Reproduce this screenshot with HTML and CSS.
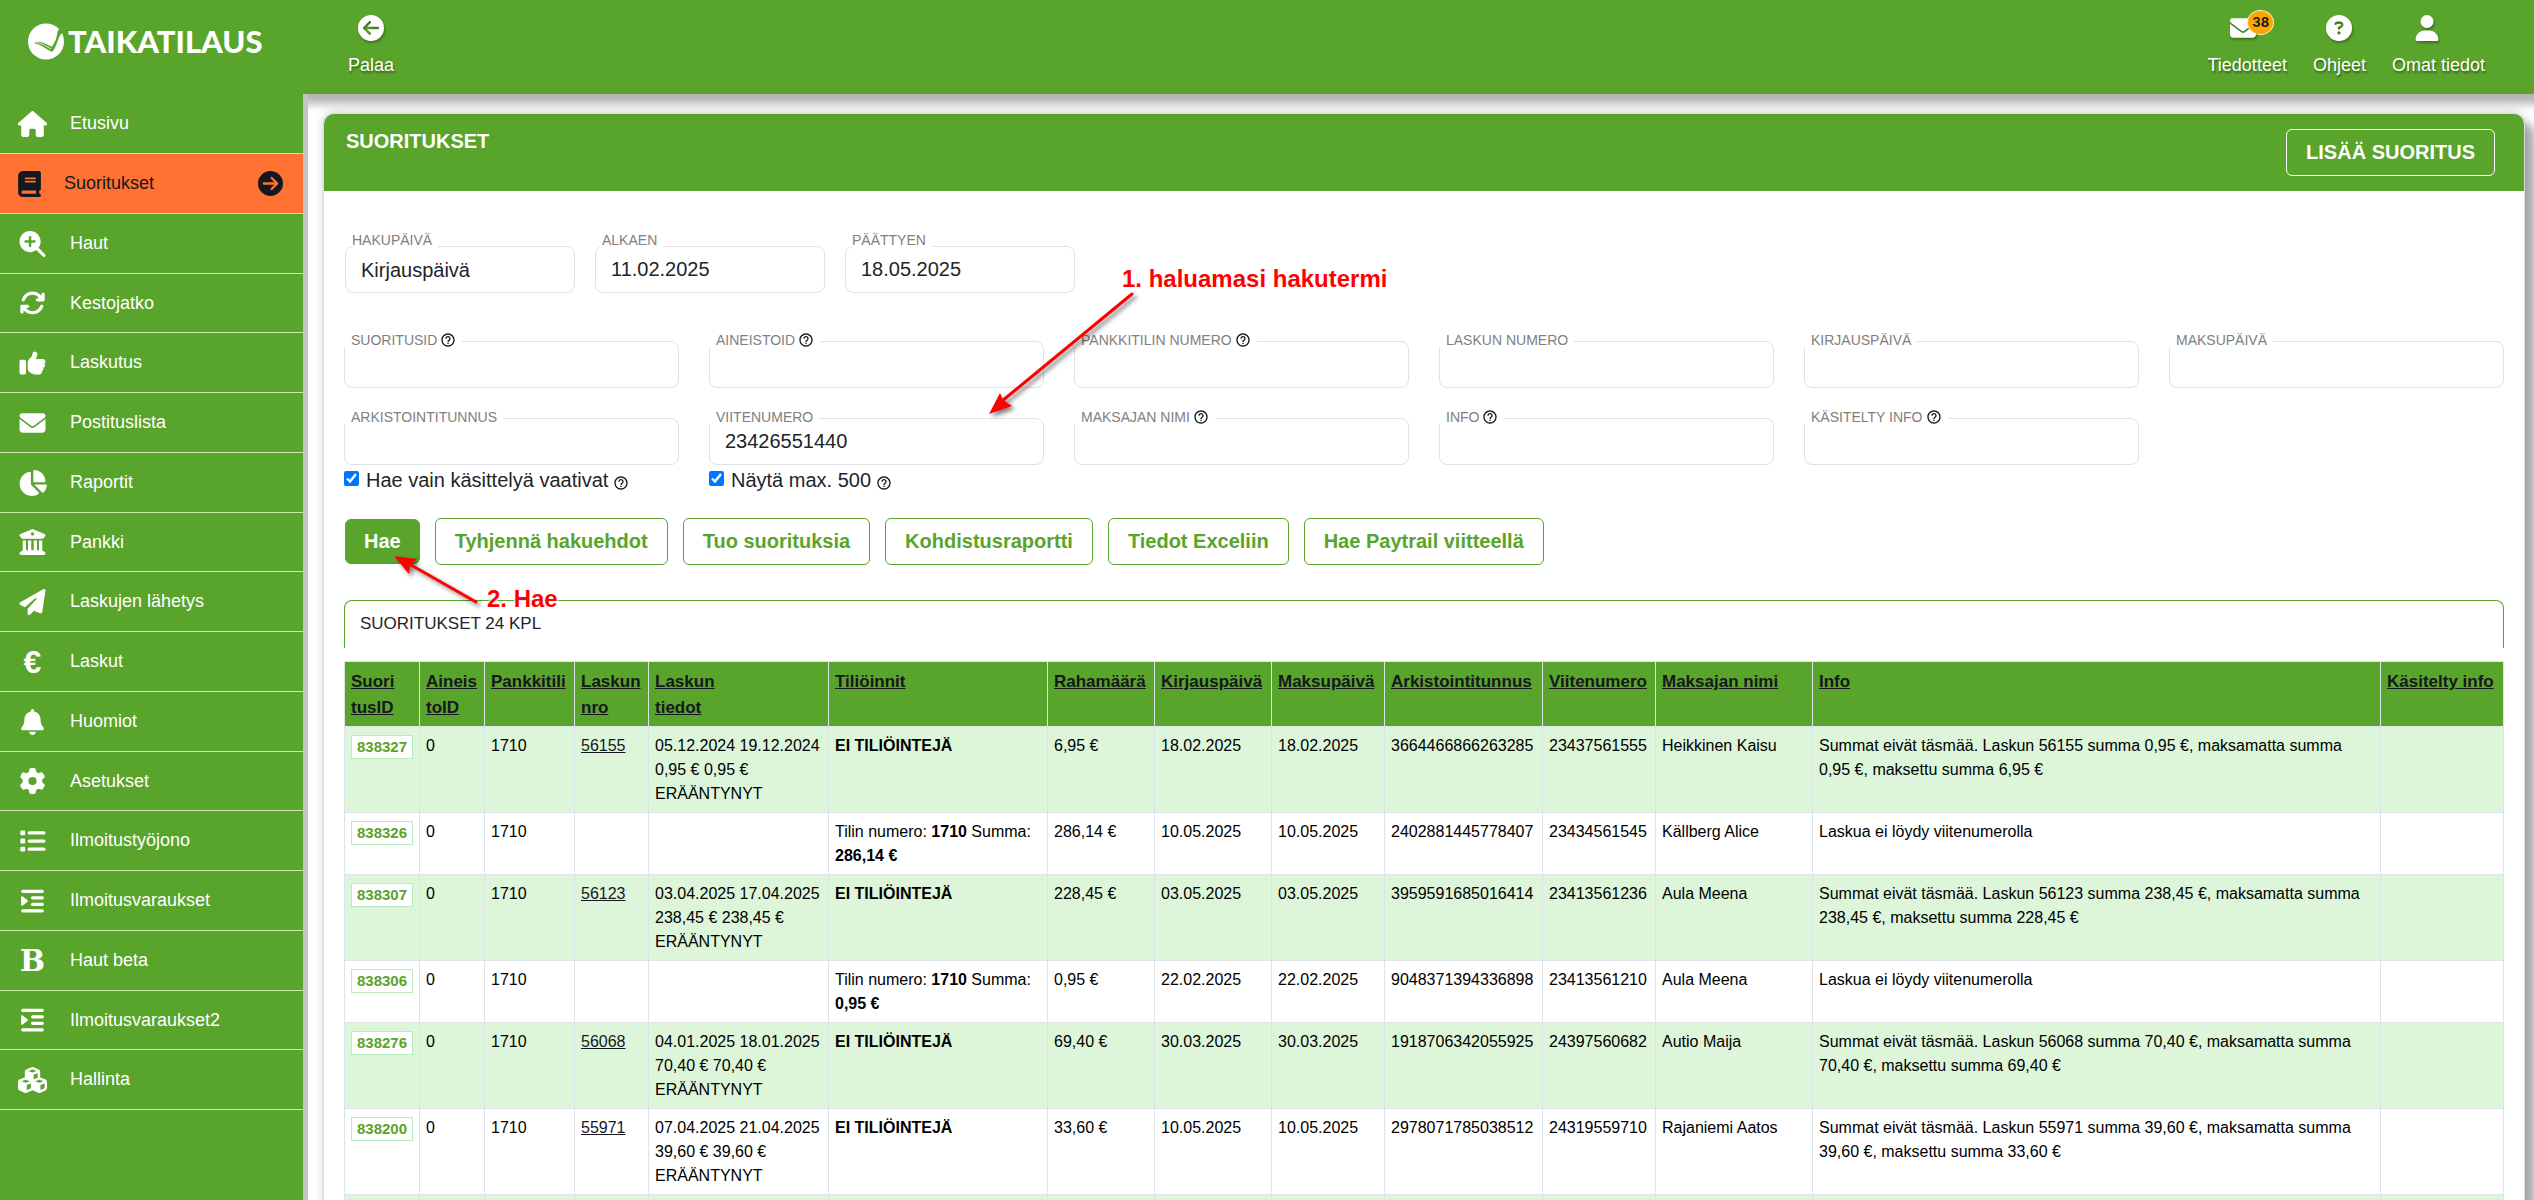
FILE: index.html
```html
<!DOCTYPE html>
<html lang="fi">
<head>
  <meta charset="UTF-8">
  <title>Suoritukset - Taikatilaus</title>
  <meta name="viewport" content="width=device-width, initial-scale=1.0">
  <link rel="stylesheet" href="styles.css">
</head>
<body>

  <!-- Icon sprite -->
  <svg class="sprite" aria-hidden="true">
    <symbol id="i-house" viewBox="0 0 576 512"><path d="M575.8 255.5c0 18-15 32.1-32 32.1h-32l.7 160.2c0 2.7-.2 5.4-.5 8.1V472c0 22.1-17.9 40-40 40H456c-1.1 0-2.2 0-3.3-.1c-1.4 .1-2.8 .1-4.2 .1H416 392c-22.1 0-40-17.9-40-40V448 384c0-17.7-14.3-32-32-32H256c-17.7 0-32 14.3-32 32v64 24c0 22.1-17.9 40-40 40H160 128.1c-1.5 0-3-.1-4.5-.2c-1.2 .1-2.4 .2-3.6 .2H104c-22.1 0-40-17.9-40-40V360c0-.9 0-1.9 .1-2.8V287.6H32c-18 0-32-14-32-32.1c0-9 3-17 10-24L266.4 8c7-7 15-8 22-8s15 2 21 7L564.8 231.5c8 7 12 15 11 24z"/></symbol>
    <symbol id="i-book" viewBox="0 0 448 512"><path d="M96 0C43 0 0 43 0 96V416c0 53 43 96 96 96H384h32c17.7 0 32-14.3 32-32s-14.3-32-32-32V384c17.7 0 32-14.3 32-32V32c0-17.7-14.3-32-32-32H384 96zm0 384H352v64H96c-17.7 0-32-14.3-32-32s14.3-32 32-32zm32-240c0-8.8 7.2-16 16-16H336c8.8 0 16 7.2 16 16s-7.2 16-16 16H144c-8.8 0-16-7.2-16-16zm16 48H336c8.8 0 16 7.2 16 16s-7.2 16-16 16H144c-8.8 0-16-7.2-16-16s7.2-16 16-16z"/></symbol>
    <symbol id="i-circle-right" viewBox="0 0 512 512"><path d="M0 256a256 256 0 1 0 512 0A256 256 0 1 0 0 256zM297 385c-9.4 9.4-24.6 9.4-33.9 0s-9.4-24.6 0-33.9l71-71L120 280c-13.3 0-24-10.7-24-24s10.7-24 24-24l214.1 0-71-71c-9.4-9.4-9.4-24.6 0-33.9s24.6-9.4 33.9 0L409 239c9.4 9.4 9.4 24.6 0 33.9L297 385z"/></symbol>
    <symbol id="i-circle-left" viewBox="0 0 512 512"><path transform="matrix(-1 0 0 1 512 0)" d="M0 256a256 256 0 1 0 512 0A256 256 0 1 0 0 256zM297 385c-9.4 9.4-24.6 9.4-33.9 0s-9.4-24.6 0-33.9l71-71L120 280c-13.3 0-24-10.7-24-24s10.7-24 24-24l214.1 0-71-71c-9.4-9.4-9.4-24.6 0-33.9s24.6-9.4 33.9 0L409 239c9.4 9.4 9.4 24.6 0 33.9L297 385z"/></symbol>
    <symbol id="i-search-plus" viewBox="0 0 512 512"><path d="M416 208c0 45.9-14.9 88.3-40 122.7L502.6 457.4c12.5 12.5 12.5 32.8 0 45.3s-32.8 12.5-45.3 0L330.7 376c-34.4 25.2-76.8 40-122.7 40C93.1 416 0 322.9 0 208S93.1 0 208 0S416 93.1 416 208zM184 296c0 13.3 10.7 24 24 24s24-10.7 24-24V232h64c13.3 0 24-10.7 24-24s-10.7-24-24-24H232V120c0-13.3-10.7-24-24-24s-24 10.7-24 24v64H120c-13.3 0-24 10.7-24 24s10.7 24 24 24h64v64z"/></symbol>
    <symbol id="i-rotate" viewBox="0 0 512 512"><path d="M105.1 202.6c7.7-21.8 20.2-42.3 37.8-59.8c62.5-62.5 163.8-62.5 226.3 0L386.3 160H352c-17.7 0-32 14.3-32 32s14.3 32 32 32H463.5c0 0 0 0 0 0h.4c17.7 0 32-14.3 32-32V80c0-17.7-14.3-32-32-32s-32 14.3-32 32v35.2L414.4 97.6c-87.5-87.5-229.3-87.5-316.8 0C73.2 122 55.6 150.7 44.8 181.4c-5.9 16.7 2.9 34.9 19.5 40.8s34.9-2.9 40.8-19.5zM39 289.3c-5 1.5-9.8 4.2-13.7 8.2c-4 4-6.7 8.8-8.1 14c-.3 1.2-.6 2.5-.8 3.8c-.3 1.7-.4 3.4-.4 5.1V432c0 17.7 14.3 32 32 32s32-14.3 32-32V396.9l17.6 17.5 0 0c87.5 87.4 229.3 87.4 316.7 0c24.4-24.4 42.1-53.1 52.9-83.7c5.9-16.7-2.9-34.9-19.5-40.8s-34.9 2.9-40.8 19.5c-7.7 21.8-20.2 42.3-37.8 59.8c-62.5 62.5-163.8 62.5-226.3 0l-.1-.1L125.6 352H160c17.7 0 32-14.3 32-32s-14.3-32-32-32H48.4c-1.6 0-3.2 .1-4.8 .3s-3.1 .5-4.6 1z"/></symbol>
    <symbol id="i-thumb" viewBox="0 0 512 512"><path d="M313.4 32.9c26 5.2 42.9 30.5 37.7 56.5l-2.3 11.4c-5.3 26.7-15.1 52.1-28.8 75.2H464c26.5 0 48 21.5 48 48c0 18.5-10.5 34.6-25.9 42.6C497 275.4 504 288.9 504 304c0 23.4-16.8 42.9-38.9 47.1c4.4 7.3 6.9 15.8 6.9 24.9c0 21.3-13.9 39.4-33.1 45.6c.7 3.3 1.1 6.8 1.1 10.4c0 26.5-21.5 48-48 48H294.5c-19 0-37.5-5.6-53.3-16.1l-38.5-25.7C176 420.4 160 390.4 160 358.3V320 272 247.1c0-29.2 13.3-56.7 36-75l7.4-5.9c26.5-21.2 44.6-51 51.2-84.2l2.3-11.4c5.2-26 30.5-42.9 56.5-37.7zM32 192H96c17.7 0 32 14.3 32 32V448c0 17.7-14.3 32-32 32H32c-17.7 0-32-14.3-32-32V224c0-17.7 14.3-32 32-32z"/></symbol>
    <symbol id="i-envelope" viewBox="0 0 512 512"><path d="M48 64C21.5 64 0 85.5 0 112c0 15.1 7.1 29.3 19.2 38.4L236.8 313.6c11.4 8.5 27 8.5 38.4 0L492.8 150.4c12.1-9.1 19.2-23.3 19.2-38.4c0-26.5-21.5-48-48-48H48zM0 176V384c0 35.3 28.7 64 64 64H448c35.3 0 64-28.7 64-64V176L294.4 339.2c-22.8 17.1-54 17.1-76.8 0L0 176z"/></symbol>
    <symbol id="i-pie" viewBox="0 0 576 512"><path d="M304 240V16.6c0-9 7-16.6 16-16.6C443.7 0 544 100.3 544 224c0 9-7.6 16-16.6 16H304zM32 272C32 150.7 122.1 50.3 239 34.3c9.2-1.3 17 6.1 17 15.4V288L412.5 444.5c6.7 6.7 6.2 17.7-1.5 23.1C371.8 495.6 323.8 512 272 512C139.5 512 32 404.6 32 272zm526.4 16c9.3 0 16.6 7.8 15.4 17c-7.7 55.9-34.6 105.6-73.9 142.3c-6 5.6-15.4 5.2-21.2-.7L320 288H558.4z"/></symbol>
    <symbol id="i-bank" viewBox="0 0 512 512"><path d="M243.4 2.6l-224 96c-14 6-21.8 21-18.7 35.8S16.8 160 32 160v8c0 13.3 10.7 24 24 24H456c13.3 0 24-10.7 24-24v-8c15.2 0 28.3-10.7 31.3-25.6s-4.8-29.9-18.7-35.8l-224-96c-8-3.4-17.2-3.4-25.2 0zM128 224H64V420.3c-.6 .3-1.2 .7-1.8 1.1l-48 32c-11.7 7.8-17 22.4-12.9 35.9S17.9 512 32 512H480c14.1 0 26.5-9.2 30.6-22.7s-1.1-28.1-12.9-35.9l-48-32c-.6-.4-1.2-.7-1.8-1.1V224H384V416H344V224H280V416H232V224H168V416H128V224zM256 64a32 32 0 1 1 0 64 32 32 0 1 1 0-64z"/></symbol>
    <symbol id="i-plane" viewBox="0 0 512 512"><path d="M498.1 5.6c10.1 7 15.4 19.1 13.5 31.2l-64 416c-1.5 9.7-7.4 18.2-16 23s-18.9 5.4-28 1.6L284 427.7l-68.5 74.1c-8.9 9.7-22.9 12.9-35.2 8.1S160 493.2 160 480V396.4c0-4 1.5-7.8 4.2-10.7L331.8 202.8c5.8-6.3 5.6-16-.4-22s-15.7-6.4-22-.7L106 360.8 17.7 316.6C7.1 311.3 .3 300.7 0 288.9s5.9-22.8 16.1-28.7l448-256c10.7-6.1 23.9-5.5 34 1.4z"/></symbol>
    <symbol id="i-bell" viewBox="0 0 448 512"><path d="M224 0c-17.7 0-32 14.3-32 32V51.2C119 66 64 130.6 64 208v18.8c0 47-17.3 92.4-48.5 127.6l-7.4 8.3c-8.4 9.4-10.4 22.9-5.3 34.4S19.4 416 32 416H416c12.6 0 24-7.4 29.2-18.9s3.1-25-5.3-34.4l-7.4-8.3C401.3 319.2 384 273.9 384 226.8V208c0-77.4-55-142-128-156.8V32c0-17.7-14.3-32-32-32zm45.3 493.3c12-12 18.7-28.3 18.7-45.3H224 160c0 17 6.7 33.3 18.7 45.3s28.3 18.7 45.3 18.7s33.3-6.7 45.3-18.7z"/></symbol>
    <symbol id="i-gear" viewBox="0 0 512 512"><path d="M495.9 166.6c3.2 8.7 .5 18.4-6.4 24.6l-43.3 39.4c1.1 8.3 1.7 16.8 1.7 25.4s-.6 17.1-1.7 25.4l43.3 39.4c6.9 6.2 9.6 15.9 6.4 24.6c-4.4 11.9-9.7 23.3-15.8 34.3l-4.7 8.1c-6.6 11-14 21.4-22.1 31.2c-5.9 7.2-15.7 9.6-24.5 6.8l-55.7-17.7c-13.4 10.3-28.2 18.9-44 25.4l-12.5 57.1c-2 9.1-9 16.3-18.2 17.8c-13.8 2.3-28 3.5-42.5 3.5s-28.7-1.2-42.5-3.5c-9.2-1.5-16.2-8.7-18.2-17.8l-12.5-57.1c-15.8-6.5-30.6-15.1-44-25.4L83.1 425.9c-8.8 2.8-18.6 .3-24.5-6.8c-8.1-9.8-15.5-20.2-22.1-31.2l-4.7-8.1c-6.1-11-11.4-22.4-15.8-34.3c-3.2-8.7-.5-18.4 6.4-24.6l43.3-39.4C64.6 273.1 64 264.6 64 256s.6-17.1 1.7-25.4L22.4 191.2c-6.9-6.2-9.6-15.9-6.4-24.6c4.4-11.9 9.7-23.3 15.8-34.3l4.7-8.1c6.6-11 14-21.4 22.1-31.2c5.9-7.2 15.7-9.6 24.5-6.8l55.7 17.7c13.4-10.3 28.2-18.9 44-25.4l12.5-57.1c2-9.1 9-16.3 18.2-17.8C227.3 1.2 241.5 0 256 0s28.7 1.2 42.5 3.5c9.2 1.5 16.2 8.7 18.2 17.8l12.5 57.1c15.8 6.5 30.6 15.1 44 25.4l55.7-17.7c8.8-2.8 18.6-.3 24.5 6.8c8.1 9.8 15.5 20.2 22.1 31.2l4.7 8.1c6.1 11 11.4 22.4 15.8 34.3zM256 336a80 80 0 1 0 0-160 80 80 0 1 0 0 160z"/></symbol>
    <symbol id="i-list" viewBox="0 0 512 512"><rect x="16" y="48" width="96" height="96" rx="24"/><rect x="16" y="208" width="96" height="96" rx="24"/><rect x="16" y="368" width="96" height="96" rx="24"/><rect x="160" y="64" width="352" height="64" rx="32"/><rect x="160" y="224" width="352" height="64" rx="32"/><rect x="160" y="384" width="352" height="64" rx="32"/></symbol>
    <symbol id="i-indent" viewBox="0 0 448 512"><rect x="0" y="32" width="448" height="64" rx="32"/><rect x="192" y="160" width="256" height="64" rx="32"/><rect x="192" y="288" width="256" height="64" rx="32"/><rect x="0" y="416" width="448" height="64" rx="32"/><path d="M127.8 268.6L25.8 347.9C15.3 356.1 0 348.6 0 335.3V176.7c0-13.3 15.3-20.8 25.8-12.6l102 79.3c8.2 6.4 8.2 18.8 0 25.2z"/></symbol>
    <symbol id="i-cubes" viewBox="0 0 576 512"><path d="M290.8 48.6l78.4 29.7L288 109.5 206.8 78.3l78.4-29.7c1.8-.7 3.8-.7 5.7 0zM136 92.5V204.7c-1.3 .4-2.6 .8-3.9 1.3l-96 36.4C14.4 250.6 0 271.5 0 294.7V413.9c0 22.2 13.1 42.3 33.5 51.3l96 42.2c14.4 6.3 30.7 6.3 45.1 0L288 457.5l113.5 49.9c14.4 6.3 30.7 6.3 45.1 0l96-42.2c20.3-8.9 33.5-29.1 33.5-51.3V294.7c0-23.3-14.4-44.1-36.1-52.4l-96-36.4c-1.3-.5-2.6-.9-3.9-1.3V92.5c0-23.3-14.4-44.1-36.1-52.4l-96-36.4c-12.8-4.8-26.9-4.8-39.7 0l-96 36.4C150.4 48.4 136 69.3 136 92.5zM392 210.6l-82.4 31.2V152.6L392 121v89.6zM154.8 250.9l78.4 29.7L152 311.7 70.8 280.6l78.4-29.7c1.8-.7 3.8-.7 5.7 0zm18.8 204.4V354.8L256 323.2v95.9l-82.4 36.2zM421.2 250.9c1.8-.7 3.8-.7 5.7 0l78.4 29.7L424 311.7l-81.2-31.1 78.4-29.7zM523.2 421.2l-77.6 34.1V354.8L528 323.2v90.7c0 3.2-1.9 6-4.8 7.3z"/></symbol>
    <symbol id="i-question" viewBox="0 0 512 512"><path d="M256 512A256 256 0 1 0 256 0a256 256 0 1 0 0 512zM169.8 165.3c7.9-22.3 29.1-37.3 52.8-37.3h58.3c34.9 0 63.1 28.3 63.1 63.1c0 22.6-12.1 43.5-31.7 54.8L280 264.4c-.2 13-10.9 23.6-24 23.6c-13.3 0-24-10.7-24-24V250.5c0-8.6 4.6-16.5 12.1-20.8l44.3-25.4c4.7-2.7 7.6-7.7 7.6-13.1c0-8.4-6.8-15.1-15.1-15.1H222.6c-3.4 0-6.4 2.1-7.5 5.3l-.4 1.2c-4.4 12.5-18.2 19-30.6 14.6s-19-18.2-14.6-30.6l.4-1.2zM224 352a32 32 0 1 1 64 0 32 32 0 1 1 -64 0z"/></symbol>
    <symbol id="i-user" viewBox="0 0 448 512"><path d="M224 256A128 128 0 1 0 224 0a128 128 0 1 0 0 256zm-45.7 48C79.8 304 0 383.8 0 482.3C0 498.7 13.3 512 29.7 512H418.3c16.4 0 29.7-13.3 29.7-29.7C448 383.8 368.2 304 269.7 304H178.3z"/></symbol>
    <symbol id="i-help" viewBox="0 0 24 24"><path d="M11 18h2v-2h-2v2zm1-16C6.480 2 2 6.480 2 12s4.480 10 10 10 10-4.480 10-10S17.520 2 12 2zm0 18c-4.410 0-8-3.590-8-8s3.590-8 8-8 8 3.590 8 8-3.590 8-8 8zm0-14c-2.210 0-4 1.790-4 4h2c0-1.100.900-2 2-2s2 .900 2 2c0 2-3 1.750-3 5h2c0-2.250 3-2.500 3-5 0-2.210-1.790-4-4-4z"/></symbol>
  </svg>

  <header class="topbar">
    <a class="logo" href="#">
      <svg class="logo-mark" viewBox="0 0 37 37">
        <circle cx="18" cy="18.500" r="18" fill="#fff"/>
        <path d="M32 5C28 8 30 15 26 20C25 23 24 24 22 23C17 20 12 18 7 19L7 21C13 21 18 26 24 29C28 26 29 17 33 11L38 9V3Z" fill="#59a42b"/>
        <path d="M7 18.500C13 16 19 21 24 23M7 20C13 19 18 23 23 26" fill="none" stroke="#fff" stroke-width="0.800"/>
      </svg>
      <span class="logo-text">TAIKATILAUS</span>
    </a>
    <a class="top-link" href="#">
      <svg class="top-icon"><use href="#i-circle-left"/></svg>
      <span>Palaa</span>
    </a>
    <nav class="top-nav">
      <a class="top-link" href="#">
        <span class="icon-wrap">
          <svg class="top-icon"><use href="#i-envelope"/></svg>
          <span class="count">38</span>
        </span>
        <span>Tiedotteet</span>
      </a>
      <a class="top-link" href="#">
        <svg class="top-icon"><use href="#i-question"/></svg>
        <span>Ohjeet</span>
      </a>
      <a class="top-link user-link" href="#">
        <svg class="top-icon"><use href="#i-user"/></svg>
        <span>Omat tiedot</span>
      </a>
    </nav>
  </header>

  <div class="layout">
    <nav class="sidebar">
      <a href="#"><svg class="side-icon"><use href="#i-house"/></svg>Etusivu</a>
      <a href="#" class="active"><svg class="side-icon"><use href="#i-book"/></svg>Suoritukset<svg class="arrow-icon"><use href="#i-circle-right"/></svg></a>
      <a href="#"><svg class="side-icon"><use href="#i-search-plus"/></svg>Haut</a>
      <a href="#"><svg class="side-icon"><use href="#i-rotate"/></svg>Kestojatko</a>
      <a href="#"><svg class="side-icon"><use href="#i-thumb"/></svg>Laskutus</a>
      <a href="#"><svg class="side-icon"><use href="#i-envelope"/></svg>Postituslista</a>
      <a href="#"><svg class="side-icon"><use href="#i-pie"/></svg>Raportit</a>
      <a href="#"><svg class="side-icon"><use href="#i-bank"/></svg>Pankki</a>
      <a href="#"><svg class="side-icon"><use href="#i-plane"/></svg>Laskujen lähetys</a>
      <a href="#"><span class="side-icon glyph-euro">€</span>Laskut</a>
      <a href="#"><svg class="side-icon"><use href="#i-bell"/></svg>Huomiot</a>
      <a href="#"><svg class="side-icon"><use href="#i-gear"/></svg>Asetukset</a>
      <a href="#"><svg class="side-icon"><use href="#i-list"/></svg>Ilmoitustyöjono</a>
      <a href="#"><svg class="side-icon"><use href="#i-indent"/></svg>Ilmoitusvaraukset</a>
      <a href="#"><span class="side-icon glyph-b">B</span>Haut beta</a>
      <a href="#"><svg class="side-icon"><use href="#i-indent"/></svg>Ilmoitusvaraukset2</a>
      <a href="#"><svg class="side-icon"><use href="#i-cubes"/></svg>Hallinta</a>
    </nav>

    <main class="content">
      <section class="card">
        <div class="card-header">
          <h1>SUORITUKSET</h1>
          <button type="button" class="btn btn-light">LISÄÄ SUORITUS</button>
        </div>

        <div class="card-body">
          <form>
            <div class="date-row">
              <div class="field">
                <label for="hakupaiva">HAKUPÄIVÄ</label>
                <select id="hakupaiva"><option>Kirjauspäivä</option></select>
              </div>
              <div class="field">
                <label for="alkaen">ALKAEN</label>
                <input type="text" id="alkaen" value="11.02.2025">
              </div>
              <div class="field">
                <label for="paattyen">PÄÄTTYEN</label>
                <input type="text" id="paattyen" value="18.05.2025">
              </div>
            </div>

            <div class="field-grid">
              <div class="field">
                <label for="suoritusid">SUORITUSID <svg class="help"><use href="#i-help"/></svg></label>
                <input type="text" id="suoritusid">
              </div>
              <div class="field">
                <label for="aineistoid">AINEISTOID <svg class="help"><use href="#i-help"/></svg></label>
                <input type="text" id="aineistoid">
              </div>
              <div class="field">
                <label for="pankkitili">PANKKITILIN NUMERO <svg class="help"><use href="#i-help"/></svg></label>
                <input type="text" id="pankkitili">
              </div>
              <div class="field">
                <label for="laskunro">LASKUN NUMERO</label>
                <input type="text" id="laskunro">
              </div>
              <div class="field">
                <label for="kirjauspaiva">KIRJAUSPÄIVÄ</label>
                <input type="text" id="kirjauspaiva">
              </div>
              <div class="field">
                <label for="maksupaiva">MAKSUPÄIVÄ</label>
                <input type="text" id="maksupaiva">
              </div>
              <div class="field">
                <label for="arkistointi">ARKISTOINTITUNNUS</label>
                <input type="text" id="arkistointi">
              </div>
              <div class="field">
                <label for="viitenumero">VIITENUMERO</label>
                <input type="text" id="viitenumero" value="23426551440">
              </div>
              <div class="field">
                <label for="maksaja">MAKSAJAN NIMI <svg class="help"><use href="#i-help"/></svg></label>
                <input type="text" id="maksaja">
              </div>
              <div class="field">
                <label for="info">INFO <svg class="help"><use href="#i-help"/></svg></label>
                <input type="text" id="info">
              </div>
              <div class="field">
                <label for="kasitelty">KÄSITELTY INFO <svg class="help"><use href="#i-help"/></svg></label>
                <input type="text" id="kasitelty">
              </div>
            </div>

            <div class="check-grid">
              <div class="check">
                <input type="checkbox" id="vaativat" checked>
                <label for="vaativat">Hae vain käsittelyä vaativat</label>
                <svg class="help"><use href="#i-help"/></svg>
              </div>
              <div class="check">
                <input type="checkbox" id="max500" checked>
                <label for="max500">Näytä max. 500</label>
                <svg class="help"><use href="#i-help"/></svg>
              </div>
            </div>

            <div class="buttons">
              <button type="button" class="btn btn-primary">Hae</button>
              <button type="button" class="btn">Tyhjennä hakuehdot</button>
              <button type="button" class="btn">Tuo suorituksia</button>
              <button type="button" class="btn">Kohdistusraportti</button>
              <button type="button" class="btn">Tiedot Exceliin</button>
              <button type="button" class="btn">Hae Paytrail viitteellä</button>
            </div>
          </form>

          <div class="summary">SUORITUKSET 24 KPL</div>

          <table class="payments">
            <colgroup>
              <col class="c-id"><col class="c-batch"><col class="c-account"><col class="c-bill"><col class="c-billinfo">
              <col class="c-posting"><col class="c-sum"><col class="c-date"><col class="c-paid"><col class="c-archive">
              <col class="c-ref"><col class="c-payer"><col><col class="c-handled">
            </colgroup>
            <thead>
              <tr>
                <th><a href="#">Suori<br>tusID</a></th>
                <th><a href="#">Aineis<br>toID</a></th>
                <th><a href="#">Pankkitili</a></th>
                <th><a href="#">Laskun<br>nro</a></th>
                <th><a href="#">Laskun<br>tiedot</a></th>
                <th><a href="#">Tiliöinnit</a></th>
                <th><a href="#">Rahamäärä</a></th>
                <th><a href="#">Kirjauspäivä</a></th>
                <th><a href="#">Maksupäivä</a></th>
                <th><a href="#">Arkistointitunnus</a></th>
                <th><a href="#">Viitenumero</a></th>
                <th><a href="#">Maksajan nimi</a></th>
                <th><a href="#">Info</a></th>
                <th><a href="#">Käsitelty info</a></th>
              </tr>
            </thead>
            <tbody>
              <tr>
                <td><a class="id-link" href="#">838327</a></td>
                <td>0</td>
                <td>1710</td>
                <td><a href="#">56155</a></td>
                <td>05.12.2024 19.12.2024<br>0,95 € 0,95 €<br>ERÄÄNTYNYT</td>
                <td><b>EI TILIÖINTEJÄ</b></td>
                <td>6,95 €</td>
                <td>18.02.2025</td>
                <td>18.02.2025</td>
                <td>3664466866263285</td>
                <td>23437561555</td>
                <td>Heikkinen Kaisu</td>
                <td>Summat eivät täsmää. Laskun 56155 summa 0,95&nbsp;€, maksamatta summa 0,95&nbsp;€, maksettu summa 6,95&nbsp;€</td>
                <td></td>
              </tr>
              <tr>
                <td><a class="id-link" href="#">838326</a></td>
                <td>0</td>
                <td>1710</td>
                <td></td>
                <td></td>
                <td>Tilin numero: <b>1710</b> Summa: <b>286,14&nbsp;€</b></td>
                <td>286,14 €</td>
                <td>10.05.2025</td>
                <td>10.05.2025</td>
                <td>2402881445778407</td>
                <td>23434561545</td>
                <td>Källberg Alice</td>
                <td>Laskua ei löydy viitenumerolla</td>
                <td></td>
              </tr>
              <tr>
                <td><a class="id-link" href="#">838307</a></td>
                <td>0</td>
                <td>1710</td>
                <td><a href="#">56123</a></td>
                <td>03.04.2025 17.04.2025<br>238,45 € 238,45 €<br>ERÄÄNTYNYT</td>
                <td><b>EI TILIÖINTEJÄ</b></td>
                <td>228,45 €</td>
                <td>03.05.2025</td>
                <td>03.05.2025</td>
                <td>3959591685016414</td>
                <td>23413561236</td>
                <td>Aula Meena</td>
                <td>Summat eivät täsmää. Laskun 56123 summa 238,45&nbsp;€, maksamatta summa 238,45&nbsp;€, maksettu summa 228,45&nbsp;€</td>
                <td></td>
              </tr>
              <tr>
                <td><a class="id-link" href="#">838306</a></td>
                <td>0</td>
                <td>1710</td>
                <td></td>
                <td></td>
                <td>Tilin numero: <b>1710</b> Summa:<br><b>0,95&nbsp;€</b></td>
                <td>0,95 €</td>
                <td>22.02.2025</td>
                <td>22.02.2025</td>
                <td>9048371394336898</td>
                <td>23413561210</td>
                <td>Aula Meena</td>
                <td>Laskua ei löydy viitenumerolla</td>
                <td></td>
              </tr>
              <tr>
                <td><a class="id-link" href="#">838276</a></td>
                <td>0</td>
                <td>1710</td>
                <td><a href="#">56068</a></td>
                <td>04.01.2025 18.01.2025<br>70,40 € 70,40 €<br>ERÄÄNTYNYT</td>
                <td><b>EI TILIÖINTEJÄ</b></td>
                <td>69,40 €</td>
                <td>30.03.2025</td>
                <td>30.03.2025</td>
                <td>1918706342055925</td>
                <td>24397560682</td>
                <td>Autio Maija</td>
                <td>Summat eivät täsmää. Laskun 56068 summa 70,40&nbsp;€, maksamatta summa 70,40&nbsp;€, maksettu summa 69,40&nbsp;€</td>
                <td></td>
              </tr>
              <tr>
                <td><a class="id-link" href="#">838200</a></td>
                <td>0</td>
                <td>1710</td>
                <td><a href="#">55971</a></td>
                <td>07.04.2025 21.04.2025<br>39,60 € 39,60 €<br>ERÄÄNTYNYT</td>
                <td><b>EI TILIÖINTEJÄ</b></td>
                <td>33,60 €</td>
                <td>10.05.2025</td>
                <td>10.05.2025</td>
                <td>2978071785038512</td>
                <td>24319559710</td>
                <td>Rajaniemi Aatos</td>
                <td>Summat eivät täsmää. Laskun 55971 summa 39,60&nbsp;€, maksamatta summa 39,60&nbsp;€, maksettu summa 33,60&nbsp;€</td>
                <td></td>
              </tr>
              <tr>
                <td></td><td></td><td></td><td></td><td></td><td></td><td></td>
                <td></td><td></td><td></td><td></td><td></td><td></td><td></td>
              </tr>
            </tbody>
          </table>

          <!-- Guide steps drawn over the form -->
          <svg class="arrow arrow-term" viewBox="0 0 160 130">
            <line x1="148" y1="8" x2="18" y2="115"/>
            <polygon points="5,128 16,107 19,114 28,120"/>
          </svg>
          <svg class="arrow arrow-search" viewBox="0 0 100 60">
            <line x1="87" y1="51" x2="22" y2="14"/>
            <polygon points="5,5 28,8 21,14 20,23"/>
          </svg>
          <span class="step step-term">1. haluamasi hakutermi</span>
          <span class="step step-search">2. Hae</span>
        </div>
      </section>
    </main>
  </div>

</body>
</html>
```
FILE: styles.css
```css
* {
  box-sizing: border-box;
  margin: 0;
  padding: 0;
}

body {
  height: 100vh;
  display: flex;
  flex-direction: column;
  overflow: hidden;
  font-family: "Liberation Sans", Arial, sans-serif;
  font-size: 18px;
  background-color: #fff;
  color: #212529;
}

svg {
  fill: currentColor;
}

.sprite {
  position: absolute;
  width: 0;
  height: 0;
}

/* Top bar */
.topbar {
  position: relative;
  z-index: 2;
  flex: none;
  display: flex;
  align-items: flex-start;
  height: 94px;
  padding-right: 49px;
  background-color: #59a42b;
  color: #fff;
}

.logo {
  display: flex;
  align-items: center;
  gap: 3px;
  width: 348px;
  padding: 23px 0 0 28px;
  color: #fff;
  text-decoration: none;
}

.logo-mark {
  width: 37px;
  height: 37px;
}

.logo-text {
  font-family: Lato, sans-serif;
  font-size: 31px;
  font-weight: 900;
  line-height: 37px;
}

.top-nav {
  display: flex;
  gap: 26px;
  margin-left: auto;
}

.top-link {
  display: flex;
  flex-direction: column;
  align-items: center;
  gap: 12px;
  padding-top: 15px;
  font-size: 18px;
  line-height: 24px;
  color: #fff;
  text-decoration: none;
  text-shadow: 1px 2px 2px rgba(0, 0, 0, 0.4);
}

.top-icon {
  display: block;
  width: 26px;
  height: 26px;
  filter: drop-shadow(1px 2px 1px rgba(0, 0, 0, 0.3));
}

.icon-wrap {
  position: relative;
  margin-right: 8px;
}

.user-link .top-icon {
  margin-right: 22px;
}

.count {
  position: absolute;
  left: 17px;
  top: -5px;
  width: 27px;
  height: 25px;
  border: 1px solid #ffe9c4;
  border-radius: 50%;
  background-color: #ffa500;
  color: #16181f;
  font-family: Inter, sans-serif;
  font-size: 13px;
  font-weight: 700;
  line-height: 23px;
  text-align: center;
  text-shadow: none;
}

/* Layout */
.layout {
  flex: 1;
  min-height: 0;
  display: flex;
}

.sidebar {
  flex: none;
  width: 308px;
  background-color: #59a42b;
  border-right: 5px solid #c4c4c4;
}

.sidebar a {
  display: flex;
  align-items: center;
  gap: 23px;
  height: 60px;
  padding: 0 20px 0 18px;
  border-bottom: 1px solid #cfe6a8;
  color: #fff;
  text-decoration: none;
}

.sidebar a:nth-child(4n) {
  height: 59px;
}

.sidebar .active {
  background-color: #ff7231;
  color: #16181f;
}

.side-icon {
  flex: none;
  width: 29px;
  height: 26px;
}

.active .side-icon {
  width: 23px;
}

.glyph-euro,
.glyph-b {
  font-size: 32px;
  font-weight: bold;
  line-height: 26px;
  text-align: center;
}

.glyph-b {
  font-family: "DejaVu Serif", serif;
  font-size: 30px;
}

.arrow-icon {
  width: 25px;
  height: 25px;
  margin-left: auto;
}

.content {
  flex: 1;
  min-width: 0;
  padding: 20px 10px 0 16px;
  overflow: hidden;
  box-shadow: inset 0 20px 10px -10px rgba(0, 0, 0, 0.3);
}

/* Card */
.card {
  min-height: 100%;
  border-radius: 10px 10px 0 0;
  background-color: #fff;
  box-shadow: 0 0 0 1px #dcdcdc, 0 0 8px 1px rgba(0, 0, 0, 0.2), 12px 10px 10px rgba(0, 0, 0, 0.3);
}

.card-header {
  display: flex;
  justify-content: space-between;
  align-items: flex-start;
  padding: 15px 29px 15px 22px;
  border-radius: 10px 10px 0 0;
  background-color: #59a42b;
}

.card-header h1 {
  font-size: 20px;
  line-height: 24px;
  color: #fff;
}

.card-body {
  position: relative;
  padding: 55px 20px 0;
}

/* Search form */
.date-row {
  display: flex;
  gap: 20px;
  margin-bottom: 48px;
  padding-left: 1px;
}

.date-row .field {
  width: 230px;
}

.field-grid,
.check-grid {
  display: grid;
  grid-template-columns: repeat(6, 1fr);
  gap: 30px;
}

.field {
  position: relative;
}

.field label {
  position: absolute;
  left: 0;
  top: -8px;
  display: flex;
  align-items: center;
  gap: 3px;
  padding: 0 6px 0 7px;
  background-color: #fff;
  color: #808080;
  font-size: 14px;
  line-height: 14px;
}

.date-row .field label {
  top: -13px;
}

.field input,
.field select {
  display: block;
  width: 100%;
  height: 47px;
  padding: 0 15px;
  border: 1px solid #dee2e6;
  border-radius: 8px;
  background-color: #fff;
  color: #212529;
  font-family: inherit;
  font-size: 20px;
  appearance: none;
}

.help {
  flex: none;
  width: 16px;
  height: 16px;
  margin: -1px 0;
  color: #16181f;
}

.check {
  display: flex;
  align-items: center;
  font-size: 20px;
  line-height: 30px;
  white-space: nowrap;
}

.check input {
  width: 15px;
  height: 15px;
  margin: 0 7px 3px 0;
}

.check .help {
  margin: 6px 0 0 5px;
}

.buttons {
  display: flex;
  flex-wrap: wrap;
  align-items: center;
  gap: 15px;
  margin: 23px 0 35px;
  padding-left: 1px;
}

.btn {
  height: 47px;
  padding: 0 19px;
  border: 1px solid #59a42b;
  border-radius: 6px;
  background-color: #fff;
  color: #59a42b;
  font-family: inherit;
  font-size: 20px;
  font-weight: bold;
  cursor: pointer;
}

.btn-primary {
  height: 45px;
  padding: 0 18px;
  background-color: #59a42b;
  color: #fff;
}

.btn-light {
  border-color: #fff;
  background-color: transparent;
  color: #fff;
}

/* Results */
.summary {
  height: 48px;
  margin-bottom: 13px;
  padding-left: 15px;
  border: 1px solid #59a42b;
  border-bottom: none;
  border-radius: 8px 8px 0 0;
  font-size: 17px;
  line-height: 46px;
}

.payments {
  width: 100%;
  table-layout: fixed;
  border-collapse: collapse;
  color: #000;
  font-size: 16px;
  line-height: 24px;
}

.payments th,
.payments td {
  padding: 7px 6px 6px;
  border: 1px solid #dce4ea;
  text-align: left;
  vertical-align: top;
}

.payments th {
  padding-bottom: 5px;
  background-color: #59a42b;
  font-size: 17px;
  line-height: 26px;
  white-space: nowrap;
}

.payments a {
  color: #16181f;
}

.payments tbody tr {
  height: 62px;
}

.payments tbody tr:nth-child(odd) {
  background-color: #ddf6da;
}

.payments .id-link {
  display: inline-block;
  margin-top: 1px;
  padding: 0 5px;
  border: 1px solid #b9ecc0;
  background-color: #fff;
  color: #59a42b;
  font-size: 15px;
  font-weight: bold;
  line-height: 22px;
  text-decoration: none;
}

.c-id { width: 75px; }
.c-batch { width: 65px; }
.c-account { width: 90px; }
.c-bill { width: 74px; }
.c-billinfo { width: 180px; }
.c-posting { width: 219px; }
.c-sum { width: 107px; }
.c-date { width: 117px; }
.c-paid { width: 113px; }
.c-archive { width: 158px; }
.c-ref { width: 113px; }
.c-payer { width: 157px; }
.c-handled { width: 123px; }

/* Guide steps */
.arrow {
  position: absolute;
  overflow: visible;
  fill: #f00;
  filter: drop-shadow(3px 3px 2px rgba(0, 0, 0, 0.5));
  pointer-events: none;
}

.arrow line {
  stroke: #f00;
  stroke-width: 3px;
  stroke-linecap: round;
}

.arrow-term {
  left: 660px;
  top: 95px;
  width: 160px;
  height: 130px;
}

.arrow-search {
  left: 65px;
  top: 360px;
  width: 100px;
  height: 60px;
}

.step {
  position: absolute;
  color: #f00;
  font-size: 24px;
  font-weight: bold;
  line-height: 26px;
  text-shadow: 0 0 2px #fff, 0 0 2px #fff, 0 0 3px #fff, 0 0 3px #fff;
}

.step-term {
  left: 798px;
  top: 75px;
}

.step-search {
  left: 163px;
  top: 395px;
}
```
